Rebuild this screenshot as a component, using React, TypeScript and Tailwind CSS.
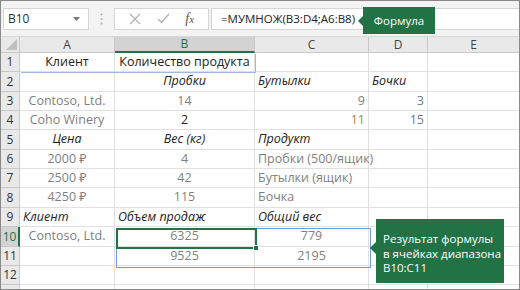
import React from "react";

const GRAY = "text-[#7f7f7f]";

type Cell = { t?: string; cls?: string };

const rowH = [
  "h-[19px]",
  "h-[20px]",
  "h-[19px]",
  "h-[19px]",
  "h-[20px]",
  "h-[19px]",
  "h-[19px]",
  "h-[20px]",
  "h-[19px]",
  "h-[20px]",
  "h-[19px]",
  "h-[19px]",
  "h-[20px]",
];

const C = "justify-center";
const L = "justify-start pl-[3px]";
const R = "justify-end pr-[3px]";

const rows: Cell[][] = [
  [
    { t: "Клиент", cls: C + " text-[#222]" },
    { t: "Количество продукта", cls: C + " text-[#222]" },
    {},
    {},
    {},
  ],
  [
    {},
    { t: "Пробки", cls: C + " italic text-[#222]" },
    { t: "Бутылки", cls: L + " italic text-[#222]" },
    { t: "Бочки", cls: L + " italic text-[#222]" },
    {},
  ],
  [
    { t: "Contoso, Ltd.", cls: C + " " + GRAY },
    { t: "14", cls: C + " " + GRAY },
    { t: "9", cls: R + " " + GRAY },
    { t: "3", cls: R + " text-[#6d7c92]" },
    {},
  ],
  [
    { t: "Coho Winery", cls: C + " " + GRAY },
    { t: "2", cls: C + " text-[#222]" },
    { t: "11", cls: R + " text-[#a08a3c]" },
    { t: "15", cls: R + " text-[#6d7c92]" },
    {},
  ],
  [
    { t: "Цена", cls: C + " italic text-[#222]" },
    { t: "Вес (кг)", cls: C + " italic text-[#222]" },
    { t: "Продукт", cls: L + " italic text-[#222]" },
    {},
    {},
  ],
  [
    { t: "2000 ₽", cls: C + " " + GRAY },
    { t: "4", cls: C + " " + GRAY },
    { t: "Пробки (500/ящик)", cls: L + " " + GRAY },
    {},
    {},
  ],
  [
    { t: "2500 ₽", cls: C + " " + GRAY },
    { t: "42", cls: C + " " + GRAY },
    { t: "Бутылки (ящик)", cls: L + " " + GRAY },
    {},
    {},
  ],
  [
    { t: "4250 ₽", cls: C + " " + GRAY },
    { t: "115", cls: C + " " + GRAY },
    { t: "Бочка", cls: L + " " + GRAY },
    {},
    {},
  ],
  [
    { t: "Клиент", cls: L + " italic text-[#222]" },
    { t: "Объем продаж", cls: L + " italic text-[#222]" },
    { t: "Общий вес", cls: L + " italic text-[#222]" },
    {},
    {},
  ],
  [
    { t: "Contoso, Ltd.", cls: C + " " + GRAY },
    { t: "6325", cls: C + " " + GRAY },
    { t: "779", cls: C + " " + GRAY },
    {},
    {},
  ],
  [
    {},
    { t: "9525", cls: C + " " + GRAY },
    { t: "2195", cls: C + " " + GRAY },
    {},
    {},
  ],
  [{}, {}, {}, {}, {}],
  [{}, {}, {}, {}, {}],
];

const GRID = "grid grid-cols-[19px_95px_140px_114px_59px_1fr]";

export default function App() {
  return (
    <div
      className="relative w-[520px] h-[290px] overflow-hidden border border-[#8a8a8a] bg-white text-[12.5px] leading-none"
      style={{ fontFamily: '"Open Sans", "Noto Sans", sans-serif' }}
    >
      {/* Formula bar */}
      <div className="flex h-[36px] items-center bg-[#f3f3f3] pl-[2px] border-b border-[#d6d6d6] text-[11.5px]">
        <div className="flex h-[22px] w-[86px] items-center justify-between border border-[#d6d6d6] bg-white pl-[4px] pr-[8px] text-[12px] text-[#333]">
          <span>B10</span>
          <svg width="7" height="4" viewBox="0 0 7 4">
            <path d="M0 0h7L3.5 4z" fill="#777" />
          </svg>
        </div>
        <div className="flex w-[25px] justify-center">
          <svg width="3" height="12" viewBox="0 0 3 12">
            <circle cx="1.5" cy="1.5" r="1" fill="#b0b0b0" />
            <circle cx="1.5" cy="6" r="1" fill="#b0b0b0" />
            <circle cx="1.5" cy="10.5" r="1" fill="#b0b0b0" />
          </svg>
        </div>
        <div className="flex h-[22px] w-[95px] items-center justify-around border border-[#d6d6d6] bg-white px-[6px]">
          <svg width="12" height="12" viewBox="0 0 12 12">
            <path d="M1 1L11 11M11 1L1 11" stroke="#b3b3b3" strokeWidth="1.3" />
          </svg>
          <svg width="13" height="11" viewBox="0 0 13 11">
            <path d="M1 6L4.5 9.5L12 1" stroke="#b3b3b3" strokeWidth="1.4" fill="none" />
          </svg>
          <span
            className="italic text-[14px] text-[#555]"
            style={{ fontFamily: '"Liberation Serif", serif' }}
          >
            f<span className="text-[11px]">x</span>
          </span>
        </div>
        <div className="ml-[2px] flex h-[22px] flex-1 items-center border border-[#d6d6d6] border-r-0 bg-white pl-[9px] text-[#222]">
          =МУМНОЖ(B3:D4;A6:B8)
        </div>
      </div>

      {/* Column headers */}
      <div className={GRID + " h-[16px] bg-[#e9e9e9] text-[12px] text-[#444]"}>
        <div className="relative border-r border-b border-[#c8c8c8]">
          <svg className="absolute right-[2px] bottom-[2px]" width="11" height="11" viewBox="0 0 11 11">
            <path d="M11 0V11H0z" fill="#c0c0c0" />
          </svg>
        </div>
        <div className="flex items-center justify-center border-r border-b border-[#c8c8c8]">A</div>
        <div className="flex items-center justify-center border-r border-b-2 border-r-[#c8c8c8] border-b-[#217346] bg-[#d3d3d3] text-[#217346]">
          B
        </div>
        <div className="flex items-center justify-center border-r border-b border-[#c8c8c8]">C</div>
        <div className="flex items-center justify-center border-r border-b border-[#c8c8c8]">D</div>
        <div className="flex items-center justify-center border-b border-[#c8c8c8]">E</div>
      </div>

      {/* Rows */}
      {rows.map((r, i) => (
        <div key={i} className={GRID + " " + rowH[i]}>
          <div
            className={
              "flex items-center justify-center border-b border-[#c8c8c8] text-[12px] " +
              (i === 9
                ? "border-r-2 border-r-[#217346] bg-[#d3d3d3] text-[#217346]"
                : "border-r border-r-[#c8c8c8] bg-[#e9e9e9] text-[#333]")
            }
          >
            {i < 12 ? i + 1 : ""}
          </div>
          {r.map((c, j) => (
            <div
              key={j}
              className={
                "flex items-center overflow-visible whitespace-nowrap border-b border-[#e0e0e0] " +
                (j < 4 ? "border-r " : "") +
                (c.cls ?? "")
              }
            >
              {c.t}
            </div>
          ))}
        </div>
      ))}

      {/* A1:B1 blue borders */}
      <div className="pointer-events-none absolute left-[20px] top-[71px] h-[1px] w-[235px] bg-[#9db8e2]" />
      <div className="pointer-events-none absolute left-[254px] top-[53px] h-[19px] w-[1px] bg-[#9db8e2]" />

      {/* Range B10:C11 */}
      <div className="pointer-events-none absolute left-[115px] top-[227px] h-[40px] w-[255px] border border-[#6e9bdc]" />
      {/* Active cell B10 */}
      <div className="pointer-events-none absolute left-[115px] top-[227px] h-[21px] w-[141px] border-2 border-[#217346]" />
      <div className="pointer-events-none absolute left-[252px] top-[244px] h-[6px] w-[6px] border border-white bg-[#217346]" />

      {/* Callout: Формула */}
      <div className="absolute left-[357px] top-[6px] flex items-center text-[11.5px]">
        <svg width="5" height="10" viewBox="0 0 5 10">
          <path d="M5 0V10L0 5z" fill="#217346" />
        </svg>
        <div className="flex h-[27px] w-[72px] items-center justify-center bg-[#217346] text-white">
          Формула
        </div>
      </div>

      {/* Callout: result */}
      <div className="absolute left-[369px] top-[218px] flex items-start text-[11.5px]">
        <svg className="mt-[23px]" width="6" height="12" viewBox="0 0 6 12">
          <path d="M6 0V12L0 6z" fill="#217346" />
        </svg>
        <div className="h-[64px] w-[128px] whitespace-nowrap bg-[#217346] pl-[7px] pt-[13px] text-white leading-[14.5px]">
          <div>Результат формулы</div>
          <div>в ячейках диапазона</div>
          <div>B10:C11</div>
        </div>
      </div>
    </div>
  );
}
